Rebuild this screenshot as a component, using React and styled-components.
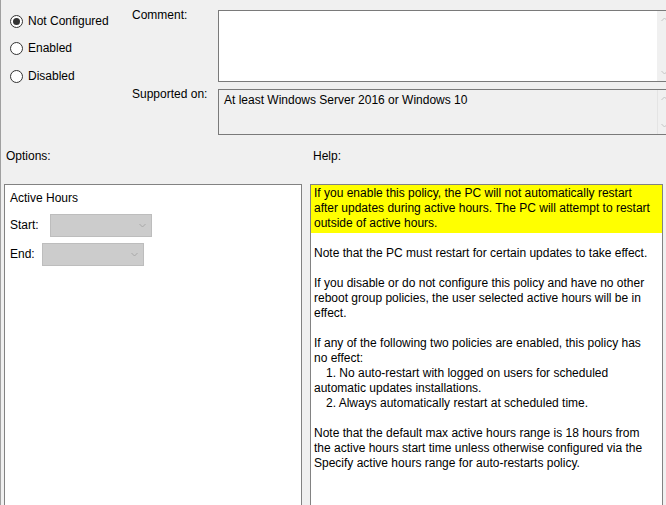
import React from "react";
import styled, { createGlobalStyle } from "styled-components";

const GlobalStyle = createGlobalStyle`
  html, body { margin: 0; padding: 0; background: #f0f0f0; }
  * { box-sizing: border-box; }
`;

const Window = styled.div`
  width: 666px;
  height: 505px;
  overflow: hidden;
  background: #f0f0f0;
  box-shadow: inset 1px 0 0 #a0a0a0;
  font-family: "Liberation Sans", Arial, sans-serif;
  font-size: 12px;
  line-height: 15px;
  color: #000;
`;

const Top = styled.div`
  display: flex;
  padding-top: 10px;
`;

const RadioGroup = styled.div`
  flex-shrink: 0;
  width: 132px;
  padding: 3.5px 0 0 10px;
  display: flex;
  flex-direction: column;
  gap: 12.5px;
`;

const RadioRow = styled.label`
  display: flex;
  align-items: center;
  gap: 5px;
  height: 15px;
  white-space: nowrap;
`;

const RadioCircle = styled.span`
  width: 13px;
  height: 13px;
  border-radius: 50%;
  border: 1px solid #333;
  background: #fff;
  display: flex;
  align-items: center;
  justify-content: center;
  &::after {
    content: "";
    width: 7px;
    height: 7px;
    border-radius: 50%;
    background: ${(p) => (p.checked ? "#333" : "transparent")};
  }
`;

const FieldGrid = styled.div`
  flex-shrink: 0;
  display: grid;
  grid-template-columns: 86px 457px;
  grid-template-rows: 72px 46px;
  row-gap: 7px;
`;

const FieldLabel = styled.div`
  margin-top: -2.5px;
  white-space: nowrap;
`;

const FieldBox = styled.div`
  display: flex;
  border: 1px solid #7a7a7a;
  background: ${(p) => (p.readOnly ? "#f0f0f0" : "#fff")};
`;

const FieldText = styled.div`
  flex: 1;
  padding: 3px 5px;
`;

const ScrollTrack = styled.div`
  width: 17px;
  background: #f0f0f0;
  border-left: 1px solid ${(p) => (p.readOnly ? "#e4e4e4" : "#f0f0f0")};
  display: flex;
  flex-direction: column;
  justify-content: space-between;
  padding: 6px 0 6px 3px;
`;

const SectionLabels = styled.div`
  display: grid;
  grid-template-columns: 298px 353px;
  column-gap: 8px;
  margin: 13.5px 0 20.5px 4px;
`;

const SectionLabel = styled.div`
  padding-left: ${(p) => p.indent}px;
`;

const Panels = styled.div`
  display: grid;
  grid-template-columns: 298px 353px;
  column-gap: 8px;
  margin-left: 4px;
  height: 340px;
`;

const Panel = styled.div`
  background: #fff;
  border: 1px solid #828282;
`;

const OptionsBody = styled.div`
  padding: 6px 5px;
`;

const OptionRow = styled.div`
  display: flex;
  align-items: center;
  margin-top: ${(p) => p.top}px;
`;

const OptionLabel = styled.span`
  width: ${(p) => p.width}px;
`;

const Select = styled.div`
  width: 102px;
  height: 23px;
  background: #cccccc;
  border: 1px solid #bdbdbd;
  display: flex;
  align-items: center;
  justify-content: flex-end;
  padding-right: 5px;
`;

const Highlight = styled.div`
  background: #ffff00;
  padding: 1px 3px 2px;
`;

const Paragraph = styled.div`
  padding: 0 3px;
  margin-top: ${(p) => (p.first ? 13 : 15)}px;
`;

const Line = styled.div`
  white-space: nowrap;
  padding-left: ${(p) => (p.indent ? 12 : 0)}px;
`;

const Chevron = ({ down, color = "#c4c4c4", w = 7 }) => (
  <svg width={w} height="5" viewBox="0 0 7 5">
    <path
      d={down ? "M0.5 1 L3.5 4 L6.5 1" : "M0.5 4 L3.5 1 L6.5 4"}
      fill="none"
      stroke={color}
      strokeWidth="1"
    />
  </svg>
);

const helpParagraphs = [
  [{ t: "Note that the PC must restart for certain updates to take effect." }],
  [
    { t: "If you disable or do not configure this policy and have no other" },
    { t: "reboot group policies, the user selected active hours will be in" },
    { t: "effect." },
  ],
  [
    { t: "If any of the following two policies are enabled, this policy has" },
    { t: "no effect:" },
    { t: "1. No auto-restart with logged on users for scheduled", indent: true },
    { t: "automatic updates installations." },
    { t: "2. Always automatically restart at scheduled time.", indent: true },
  ],
  [
    { t: "Note that the default max active hours range is 18 hours from" },
    { t: "the active hours start time unless otherwise configured via the" },
    { t: "Specify active hours range for auto-restarts policy." },
  ],
];

export default function App() {
  return (
    <>
      <GlobalStyle />
      <Window>
        <Top>
          <RadioGroup>
            <RadioRow>
              <RadioCircle checked />
              Not Configured
            </RadioRow>
            <RadioRow>
              <RadioCircle />
              Enabled
            </RadioRow>
            <RadioRow>
              <RadioCircle />
              Disabled
            </RadioRow>
          </RadioGroup>
          <FieldGrid>
            <FieldLabel>Comment:</FieldLabel>
            <FieldBox>
              <FieldText />
              <ScrollTrack>
                <Chevron />
                <Chevron down />
              </ScrollTrack>
            </FieldBox>
            <FieldLabel>Supported on:</FieldLabel>
            <FieldBox readOnly>
              <FieldText>At least Windows Server 2016 or Windows 10</FieldText>
              <ScrollTrack readOnly>
                <Chevron />
                <Chevron down />
              </ScrollTrack>
            </FieldBox>
          </FieldGrid>
        </Top>

        <SectionLabels>
          <SectionLabel indent={2}>Options:</SectionLabel>
          <SectionLabel indent={3}>Help:</SectionLabel>
        </SectionLabels>

        <Panels>
          <Panel>
            <OptionsBody>
              <div>Active Hours</div>
              <OptionRow top={7.5}>
                <OptionLabel width={40}>Start:</OptionLabel>
                <Select>
                  <Chevron down color="#a8a8a8" />
                </Select>
              </OptionRow>
              <OptionRow top={6}>
                <OptionLabel width={32}>End:</OptionLabel>
                <Select>
                  <Chevron down color="#a8a8a8" />
                </Select>
              </OptionRow>
            </OptionsBody>
          </Panel>
          <Panel>
            <Highlight>
              <Line>If you enable this policy, the PC will not automatically restart</Line>
              <Line>after updates during active hours. The PC will attempt to restart</Line>
              <Line>outside of active hours.</Line>
            </Highlight>
            {helpParagraphs.map((para, i) => (
              <Paragraph key={i} first={i === 0}>
                {para.map((l, j) => (
                  <Line key={j} indent={l.indent}>
                    {l.t}
                  </Line>
                ))}
              </Paragraph>
            ))}
          </Panel>
        </Panels>
      </Window>
    </>
  );
}
